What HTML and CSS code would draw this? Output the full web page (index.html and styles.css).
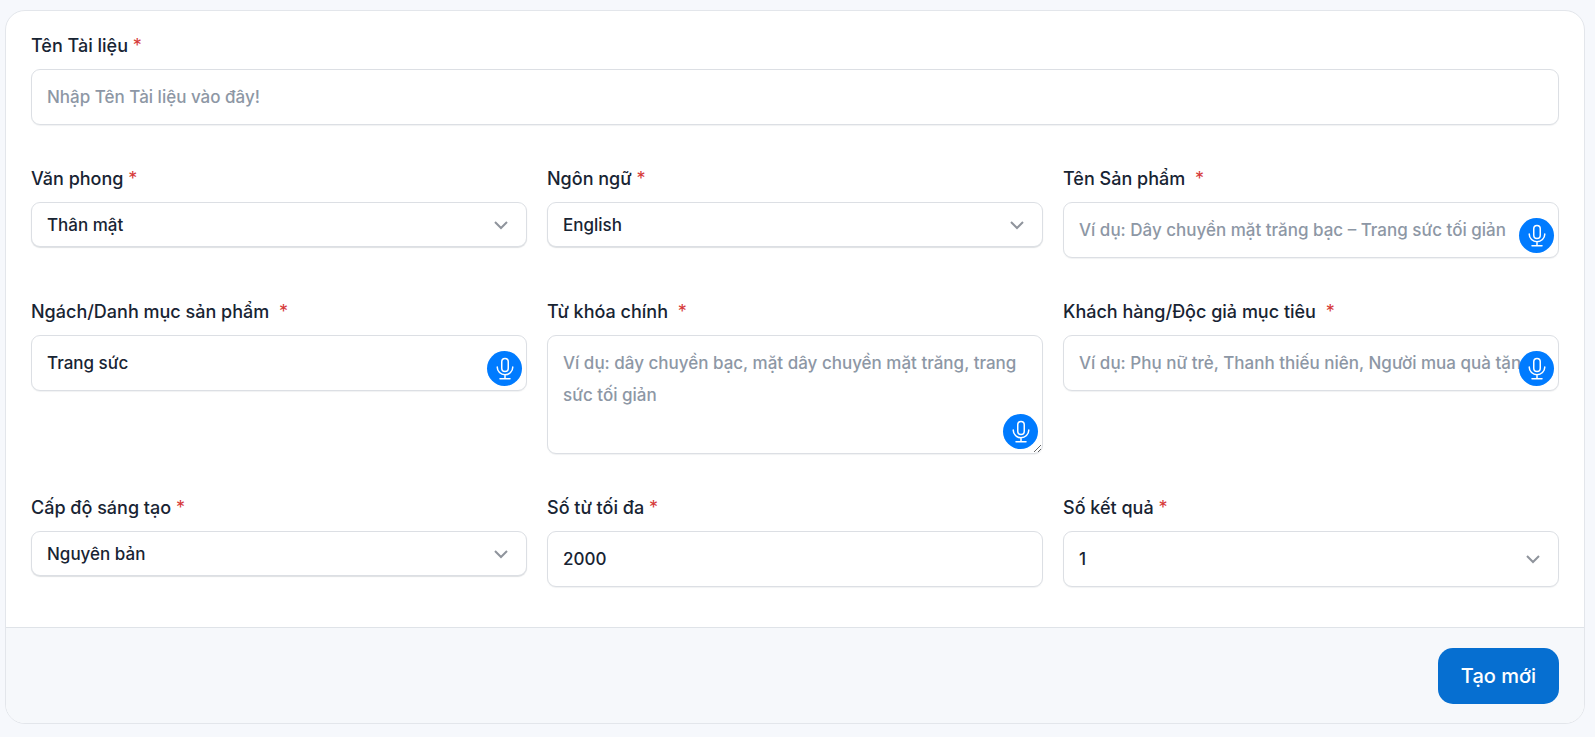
FILE: index.html
```
<!doctype html>
<html lang="vi">
<head>
    <meta charset="utf-8">
    <meta name="viewport" content="width=device-width, initial-scale=1">
    <title>Tạo tài liệu</title>
    <link rel="stylesheet" href="styles.css">
</head>

<body>

    <!-- shared icons -->
    <svg class="sprite" aria-hidden="true">
        <symbol id="mic" viewBox="0 0 24 24">
            <rect x="8.75" y="1.5" width="6.5" height="13" rx="3.25" />
            <path d="M4.25 10v0.25a7.75 7.5 0 0 0 15.5 0v-0.25M12 17.75v4M7 21.75h10" />
        </symbol>
        <symbol id="chevron" viewBox="0 0 16 16">
            <path d="M2 5l6 6 6-6" />
        </symbol>
    </svg>

    <form class="card">
        <div class="card-body">

            <div class="field wide">
                <label for="title">Tên Tài liệu <span class="required">*</span></label>
                <input class="control" id="title" type="text" placeholder="Nhập Tên Tài liệu vào đây!">
            </div>

            <div class="field">
                <label for="tone">Văn phong <span class="required">*</span></label>
                <div class="control-wrap">
                    <select class="control small" id="tone">
                        <option>Thân mật</option>
                    </select>
                    <svg class="chevron"><use href="#chevron" /></svg>
                </div>
            </div>

            <div class="field">
                <label for="language">Ngôn ngữ <span class="required">*</span></label>
                <div class="control-wrap">
                    <select class="control small" id="language">
                        <option>English</option>
                    </select>
                    <svg class="chevron"><use href="#chevron" /></svg>
                </div>
            </div>

            <div class="field">
                <label for="product">Tên Sản phẩm <span class="required spaced">*</span></label>
                <div class="control-wrap">
                    <input class="control" id="product" type="text" placeholder="Ví dụ: Dây chuyền mặt trăng bạc – Trang sức tối giản">
                    <button class="mic" type="button" aria-label="Ghi âm"><svg><use href="#mic" /></svg></button>
                </div>
            </div>

            <div class="field">
                <label for="category">Ngách/Danh mục sản phẩm <span class="required spaced">*</span></label>
                <div class="control-wrap">
                    <input class="control" id="category" type="text" value="Trang sức">
                    <button class="mic" type="button" aria-label="Ghi âm"><svg><use href="#mic" /></svg></button>
                </div>
            </div>

            <div class="field">
                <label for="keywords">Từ khóa chính <span class="required spaced">*</span></label>
                <div class="control-wrap">
                    <textarea class="control" id="keywords" placeholder="Ví dụ: dây chuyền bạc, mặt dây chuyền mặt trăng, trang sức tối giản"></textarea>
                    <button class="mic" type="button" aria-label="Ghi âm"><svg><use href="#mic" /></svg></button>
                </div>
            </div>

            <div class="field">
                <label for="audience">Khách hàng/Độc giả mục tiêu <span class="required spaced">*</span></label>
                <div class="control-wrap">
                    <input class="control" id="audience" type="text" placeholder="Ví dụ: Phụ nữ trẻ, Thanh thiếu niên, Người mua quà tặng">
                    <button class="mic" type="button" aria-label="Ghi âm"><svg><use href="#mic" /></svg></button>
                </div>
            </div>

            <div class="field">
                <label for="creativity">Cấp độ sáng tạo <span class="required">*</span></label>
                <div class="control-wrap">
                    <select class="control small" id="creativity">
                        <option>Nguyên bản</option>
                    </select>
                    <svg class="chevron"><use href="#chevron" /></svg>
                </div>
            </div>

            <div class="field">
                <label for="words">Số từ tối đa <span class="required">*</span></label>
                <input class="control" id="words" type="text" value="2000">
            </div>

            <div class="field">
                <label for="results">Số kết quả <span class="required">*</span></label>
                <div class="control-wrap">
                    <select class="control" id="results">
                        <option>1</option>
                    </select>
                    <svg class="chevron"><use href="#chevron" /></svg>
                </div>
            </div>

        </div>

        <div class="card-footer">
            <button class="submit" type="submit">Tạo mới</button>
        </div>
    </form>

</body>

</html>
```
FILE: styles.css
```
* {
    box-sizing: border-box;
}

body {
    margin: 0;
    padding: 10px 10px 12px 5px;
    background-color: #f6f8fc;
    color: #182433;
    font-family: Inter, "Noto Sans", sans-serif;
    font-size: 17px;
    font-weight: 500;
}

.sprite {
    position: absolute;
    width: 0;
    height: 0;
}

.card {
    border: 1px solid #e3e6eb;
    border-radius: 20px;
    background-color: #fff;
    overflow: hidden;
}

.card-body {
    display: grid;
    grid-template-columns: repeat(3, minmax(0, 1fr));
    align-items: start;
    gap: 40px 20px;
    padding: 21px 25px 40px;
}

.wide {
    grid-column: 1 / -1;
}

label {
    display: block;
    margin-bottom: 10px;
    font-size: 18px;
    line-height: 27px;
}

.required {
    color: #d63939;
    font-weight: 400;
}

.spaced {
    margin-left: 5px;
}

.control-wrap {
    position: relative;
}

.control {
    display: block;
    width: 100%;
    height: 56px;
    margin: 0;
    padding: 11px 15px;
    border: 1px solid #dcdfe4;
    border-radius: 9px;
    background-color: #fff;
    box-shadow: 0 1px 1px rgba(24, 36, 51, .06);
    color: inherit;
    font: inherit;
    line-height: 32px;
    appearance: none;
}

.control::placeholder {
    color: #8d97a5;
    opacity: 1;
}

.control.small {
    height: 45px;
    padding: 5px 15px;
    box-shadow: 0 1px 1px rgba(24, 36, 51, .14);
}

textarea.control {
    height: 119px;
    resize: vertical;
}

.chevron {
    position: absolute;
    top: 50%;
    right: 18px;
    width: 16px;
    height: 16px;
    margin-top: -8px;
    fill: none;
    stroke: #8f949c;
    stroke-width: 2;
    pointer-events: none;
}

.mic {
    position: absolute;
    right: 5px;
    bottom: 5px;
    display: flex;
    align-items: center;
    justify-content: center;
    width: 35px;
    height: 35px;
    padding: 0;
    border: 0;
    border-radius: 50%;
    background-color: #007bff;
    cursor: pointer;
}

.mic svg {
    width: 24px;
    height: 24px;
    fill: none;
    stroke: #fff;
    stroke-width: 1.5;
    stroke-linecap: round;
}

.card-footer {
    display: flex;
    justify-content: flex-end;
    padding: 20px 25px 19px;
    border-top: 1px solid #dfe3e8;
    background-color: #f6f8fb;
}

.submit {
    height: 56px;
    padding: 0 23px;
    border: 0;
    border-radius: 15px;
    background-color: #066fd1;
    color: #fff;
    font: inherit;
    font-size: 20px;
    cursor: pointer;
}
```
